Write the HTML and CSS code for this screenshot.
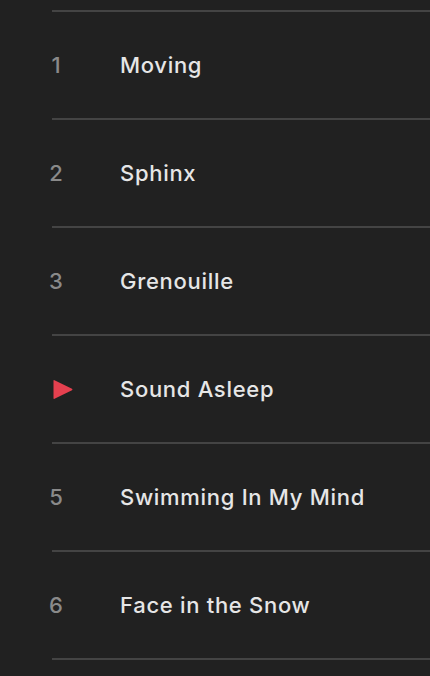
FILE: index.html
```html
<!DOCTYPE html>
<html>
<head>
<meta charset="utf-8">
<link rel="stylesheet" href="styles.css">
</head>
<body>
<ul class="tracks">
  <li class="sep"></li>
  <li class="row"><span class="num">1</span><span class="title">Moving</span></li>
  <li class="sep"></li>
  <li class="row"><span class="num">2</span><span class="title">Sphinx</span></li>
  <li class="sep"></li>
  <li class="row"><span class="num">3</span><span class="title">Grenouille</span></li>
  <li class="sep"></li>
  <li class="row playing"><span class="num"><svg class="play" width="20" height="21" viewBox="0 0 20 21"><path d="M1.5 1.2 Q0.5 0.6 0.5 1.8 V19.2 Q0.5 20.4 1.5 19.8 L19 11.2 Q20 10.5 19 9.8 Z" fill="#e5404f"/></svg></span><span class="title">Sound Asleep</span></li>
  <li class="sep"></li>
  <li class="row"><span class="num">5</span><span class="title">Swimming In My Mind</span></li>
  <li class="sep"></li>
  <li class="row"><span class="num">6</span><span class="title">Face in the Snow</span></li>
  <li class="sep"></li>
</ul>
</body>
</html>
```
FILE: styles.css
```css
html, body {
  margin: 0;
  padding: 0;
  background: #212121;
}
body {
  font-family: Inter, "Noto Sans", "Liberation Sans", sans-serif;
  overflow: hidden;
}
.tracks {
  list-style: none;
  margin: 0;
  padding: 10px 0 0 0;
}
.sep {
  height: 2px;
  margin-left: 52px;
  background: #444444;
}
.row {
  height: 106px;
  display: flex;
  align-items: center;
}
.num {
  width: 112px;
  flex: none;
  display: flex;
  justify-content: center;
  font-size: 22px;
  font-weight: 500;
  color: #8a8a8a;
}
.title {
  padding-left: 8px;
  font-size: 22px;
  font-weight: 500;
  color: #e6e6e6;
  letter-spacing: 0.7px;
}
.play {
  display: block;
  margin-left: 14px;
}
```
